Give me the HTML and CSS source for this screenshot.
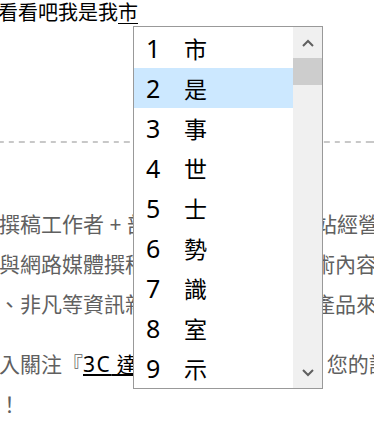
FILE: index.html
```html
<!DOCTYPE html>
<html lang="zh-Hant">
<head>
<meta charset="utf-8">
<title>IME</title>
<link rel="stylesheet" href="styles.css">
</head>
<body>
<div class="page">
  <div class="compose">看看吧我是我<span class="pending">市</span></div>
  <hr class="divider">
  <div class="article">
    <p>
      <span class="line">撰稿工作者 + 部落客，目前從事網站經營</span>
      <span class="line">與網路媒體撰稿，主要為科技與藝術內容</span>
      <span class="line">、非凡等資訊新聞，評測多種科技產品來</span>
    </p>
    <p>
      <span class="line">入關注『<a class="link"><span class="latin">3C</span> 達人</a>』粉絲專頁按讚，您的評論</span>
      <span class="line">！</span>
    </p>
  </div>
</div>
<div class="ime">
  <ol class="cands">
    <li class="cand"><span class="num">1</span><span class="ch">市</span></li>
    <li class="cand sel"><span class="num">2</span><span class="ch">是</span></li>
    <li class="cand"><span class="num">3</span><span class="ch">事</span></li>
    <li class="cand"><span class="num">4</span><span class="ch">世</span></li>
    <li class="cand"><span class="num">5</span><span class="ch">士</span></li>
    <li class="cand"><span class="num">6</span><span class="ch">勢</span></li>
    <li class="cand"><span class="num">7</span><span class="ch">識</span></li>
    <li class="cand"><span class="num">8</span><span class="ch">室</span></li>
    <li class="cand"><span class="num">9</span><span class="ch">示</span></li>
  </ol>
  <div class="scrollbar">
    <div class="sb-btn"><svg width="12" height="8" viewBox="0 0 12 8"><polyline points="1,7 6,2 11,7" fill="none" stroke="#606060" stroke-width="2"/></svg></div>
    <div class="sb-thumb"></div>
    <div class="sb-track"></div>
    <div class="sb-btn"><svg width="12" height="8" viewBox="0 0 12 8"><polyline points="1,1 6,6 11,1" fill="none" stroke="#606060" stroke-width="2"/></svg></div>
  </div>
</div>
</body>
</html>
```
FILE: styles.css
```css
html, body {
  margin: 0;
  padding: 0;
  overflow: hidden;
  background: #fff;
}
body {
  width: 374px;
  height: 432px;
  position: relative;
  font-family: "Noto Sans", "Noto Sans CJK TC", sans-serif;
}
.compose {
  margin-left: -2px;
  font-size: 20px;
  line-height: 25px;
  color: #000;
  white-space: nowrap;
}
.pending {
  text-decoration: underline;
  text-underline-offset: 3px;
  text-decoration-thickness: 1px;
}
.divider {
  margin: 116px 0 0;
  border: 0;
  height: 2px;
  background: repeating-linear-gradient(90deg, #c8c8c8 0 5.7px, transparent 5.7px 10.52px);
  background-position: -2.2px 0;
}
.article {
  margin: 61px 0 0 -1px;
  font-size: 21px;
  line-height: 40px;
  color: #606060;
}
.article p {
  margin: 0 0 20px;
}
.line {
  display: block;
  white-space: nowrap;
}
.link {
  color: #000;
  text-decoration: underline;
}
.latin {
  letter-spacing: 1.5px;
}
.ime {
  position: absolute;
  left: 133px;
  top: 26px;
  width: 188px;
  height: 361px;
  border: 1px solid #999;
  background: #fff;
  display: flex;
}
.cands {
  list-style: none;
  margin: 0;
  padding: 1px 0 0;
  width: 159px;
}
.cand {
  height: 40px;
  display: flex;
  align-items: center;
  padding-left: 12px;
}
.cand.sel {
  background: #cce8ff;
}
.num {
  width: 38px;
  font-family: "Noto Sans", sans-serif;
  font-size: 25px;
  color: #000;
}
.ch {
  font-family: "Noto Sans CJK TC", sans-serif;
  font-size: 23px;
  color: #000;
}
.scrollbar {
  width: 29px;
  background: #f0f0f0;
  display: flex;
  flex-direction: column;
}
.sb-btn {
  height: 31px;
  display: flex;
  align-items: center;
  justify-content: center;
}
.sb-thumb {
  height: 27px;
  background: #cdcdcd;
}
.sb-track {
  flex: 1;
}
```
